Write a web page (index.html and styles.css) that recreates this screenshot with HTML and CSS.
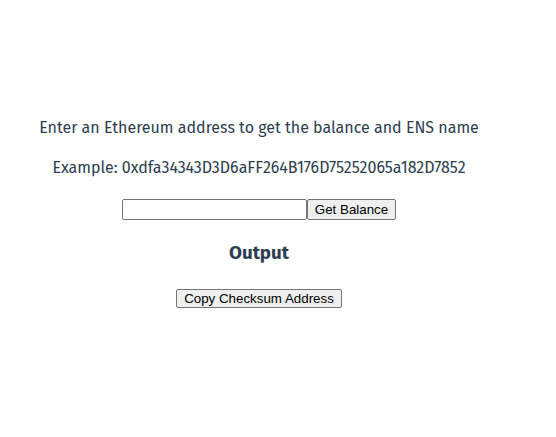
FILE: index.html
```html
<!DOCTYPE html>
<html>
<head>
<meta charset="utf-8">
<link rel="stylesheet" href="styles.css">
</head>
<body>
<div class="app">
  <p class="line">Enter an Ethereum address to get the balance and ENS name</p>
  <p class="line">Example: 0xdfa34343D3D6aFF264B176D75252065a182D7852</p>
  <div class="form"><input class="addr" type="text"><button class="btn">Get Balance</button></div>
  <h3 class="title">Output</h3>
  <div class="copy"><button class="btn btn-small">Copy Checksum Address</button></div>
</div>
</body>
</html>
```
FILE: styles.css
```css
body {
  margin: 8px 46px 8px 8px;
}
.app {
  font-family: "Fira Sans", "Open Sans", sans-serif;
  color: #2c3e50;
  text-align: center;
  padding-top: 108px;
}
.line {
  margin: 0 0 16px;
  font-size: 16px;
  line-height: 24px;
}
.form {
  display: flex;
  justify-content: center;
  align-items: stretch;
  padding-top: 3px;
}
.addr {
  box-sizing: border-box;
  width: 185px;
  height: 21px;
  padding: 1px 2px;
  border: 1px solid #767676;
  border-radius: 2px;
  margin: 0;
}
.btn {
  box-sizing: border-box;
  font-family: "Liberation Sans", Arial, sans-serif;
  font-size: 13.33px;
  color: #000;
  background: #efefef;
  border: 1px solid #767676;
  border-radius: 2px;
  padding: 1px 6px;
  margin: 0;
  width: 89px;
}
.btn-small {
  width: 166px;
  height: 19px;
  line-height: 15px;
}
.title {
  font-size: 18.72px;
  line-height: 26px;
  margin: 20px 0 23px;
}
.copy {
  display: flex;
  justify-content: center;
}
```
